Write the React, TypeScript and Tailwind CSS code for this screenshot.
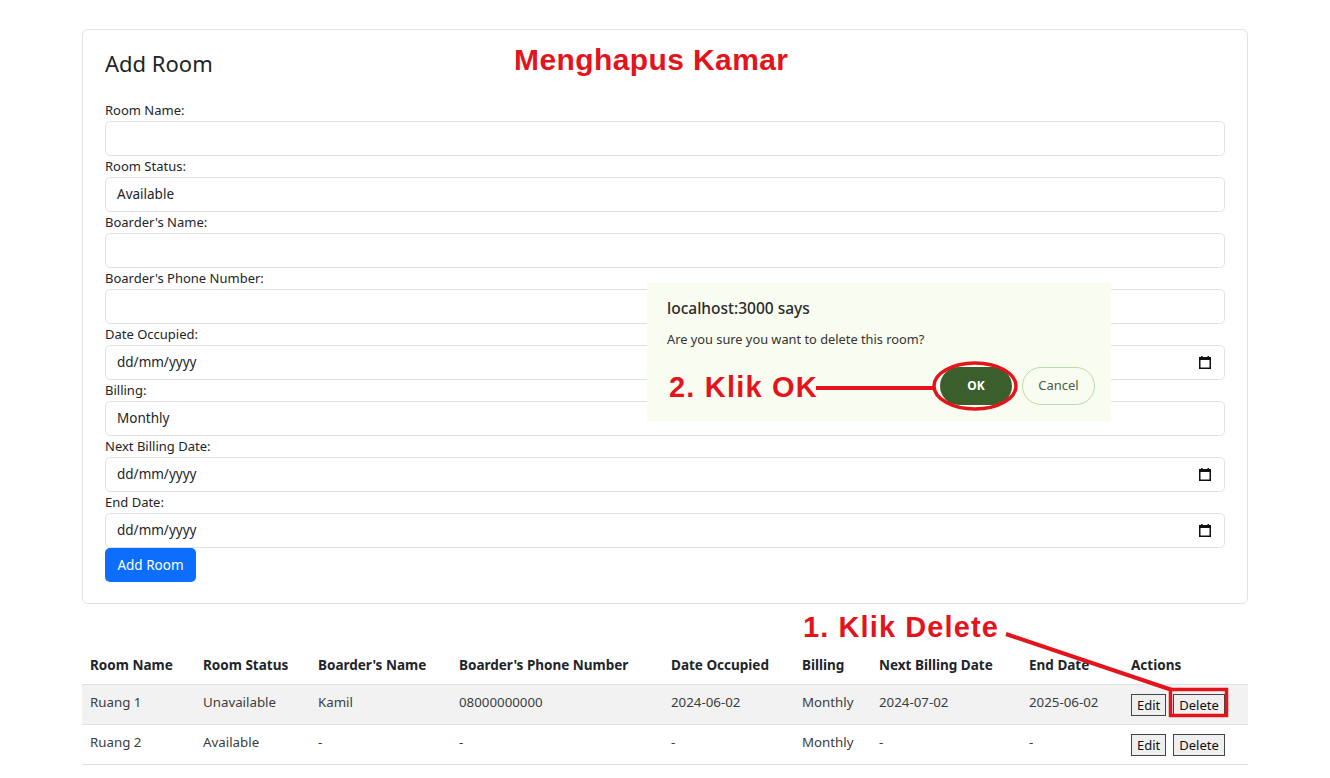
import React from "react";

const fields: { label: string; value?: string; date?: boolean }[] = [
  { label: "Room Name:" },
  { label: "Room Status:", value: "Available" },
  { label: "Boarder's Name:" },
  { label: "Boarder's Phone Number:" },
  { label: "Date Occupied:", value: "dd/mm/yyyy", date: true },
  { label: "Billing:", value: "Monthly" },
  { label: "Next Billing Date:", value: "dd/mm/yyyy", date: true },
  { label: "End Date:", value: "dd/mm/yyyy", date: true },
];

const cols = [
  { h: "Room Name", w: "w-[113px]" },
  { h: "Room Status", w: "w-[115px]" },
  { h: "Boarder's Name", w: "w-[141px]" },
  { h: "Boarder's Phone Number", w: "w-[212px]" },
  { h: "Date Occupied", w: "w-[131px]" },
  { h: "Billing", w: "w-[77px]" },
  { h: "Next Billing Date", w: "w-[150px]" },
  { h: "End Date", w: "w-[102px]" },
  { h: "Actions", w: "w-[125px]" },
];

const rows = [
  ["Ruang 1", "Unavailable", "Kamil", "08000000000", "2024-06-02", "Monthly", "2024-07-02", "2025-06-02"],
  ["Ruang 2", "Available", "-", "-", "-", "Monthly", "-", "-"],
];

function CalendarIcon() {
  return (
    <svg width="12" height="13" viewBox="0 0 12 13" className="block">
      <rect x="0.75" y="1.75" width="10.5" height="10.5" fill="none" stroke="#111" strokeWidth="1.5" />
      <rect x="0" y="1" width="12" height="3" fill="#111" />
      <rect x="2" y="0" width="1.5" height="2" fill="#111" />
      <rect x="8.5" y="0" width="1.5" height="2" fill="#111" />
    </svg>
  );
}

export default function App() {
  return (
    <div className="relative w-[1330px] min-h-[778px] bg-white font-['Noto_Sans',sans-serif] text-[#212529]">
      <div className="mx-[82px] pt-[29px]">
        {/* Card */}
        <div className="border border-[#dfe2e5] rounded-[6px] px-[22px] pt-[19px] pb-[21px]">
          <h3 className="text-[22px] leading-[28px] mb-[23px] text-[#212529]">Add Room</h3>
          <div className="flex flex-col">
            {fields.map((f) => (
              <div key={f.label} className="flex flex-col">
                <label className="text-[13px] leading-[21px] text-[#212529]">{f.label}</label>
                <div className="h-[35px] border border-[#dee2e6] rounded-[5px] flex items-center justify-between pl-[11px] pr-[13px] text-[13.5px] text-[#212529]">
                  <span>{f.value ?? ""}</span>
                  {f.date && <CalendarIcon />}
                </div>
              </div>
            ))}
          </div>
          <button className="mt-0 h-[34px] w-[91px] bg-[#0d6efd] text-white text-[13.5px] rounded-[5px]">Add Room</button>
        </div>

        {/* Table */}
        <table className="mt-[42px] w-full border-collapse table-fixed">
          <thead>
            <tr className="h-[38px] border-b border-[#dee2e6]">
              {cols.map((c) => (
                <th key={c.h} className={`${c.w} text-left font-bold px-[8px] text-[13.5px] text-[#212529]`}>{c.h}</th>
              ))}
            </tr>
          </thead>
          <tbody>
            {rows.map((r, i) => (
              <tr key={i} className={`h-[40px] border-b border-[#dee2e6] ${i === 0 ? "bg-[#f2f2f2]" : "bg-white"}`}>
                {r.map((v, j) => (
                  <td key={j} className="px-[8px] pb-[3px] text-[13.3px] text-[#3a3d40]">{v}</td>
                ))}
                <td className="px-[8px]">
                  <div className="flex gap-[7px] pt-[2px]">
                    <button className="h-[22px] px-[5px] border border-[#444] bg-[#efefef] text-[13px] leading-none text-[#111]">Edit</button>
                    <button className="h-[22px] px-[5px] border border-[#444] bg-[#efefef] text-[13px] leading-none text-[#111]">Delete</button>
                  </div>
                </td>
              </tr>
            ))}
          </tbody>
        </table>
      </div>

      {/* Title annotation */}
      <div className="absolute left-[514px] top-[40px] text-[30px] leading-[40px] font-bold text-[#e3141b] font-['Liberation_Sans',Arial,sans-serif] tracking-[0.4px]">
        Menghapus Kamar
      </div>

      {/* Dialog */}
      <div className="absolute left-[647px] top-[283px] w-[464px] h-[138px] bg-[#f8fcf1]">
        <div className="absolute left-[20px] top-[14px] text-[15.5px] leading-[22px] font-medium text-[#2b2b2b]">localhost:3000 says</div>
        <div className="absolute left-[20px] top-[47px] text-[12.8px] leading-[18px] text-[#333]">Are you sure you want to delete this room?</div>
        <div className="absolute left-[293px] top-[84px] flex gap-[10px]">
          <button className="h-[38px] w-[72px] rounded-full bg-[#3a5e2c] text-white text-[12px] font-bold">OK</button>
          <button className="h-[38px] w-[73px] rounded-full border border-[#bcdcae] text-[#4d5c48] text-[13px]">Cancel</button>
        </div>
      </div>

      <div className="absolute left-[669px] top-[369px] text-[29px] leading-[36px] font-bold text-[#e3141b] font-['Liberation_Sans',Arial,sans-serif] tracking-[1.2px]">
        2. Klik OK
      </div>
      <div className="absolute left-[803px] top-[608px] text-[29px] leading-[38px] font-bold text-[#e3141b] font-['Liberation_Sans',Arial,sans-serif] tracking-[1.1px]">
        1. Klik Delete
      </div>

      {/* Annotation drawings */}
      <svg className="absolute inset-0 pointer-events-none" width="1330" height="778">
        <line x1="816" y1="388" x2="935" y2="388" stroke="#e3141b" strokeWidth="4" />
        <ellipse cx="975" cy="386" rx="41" ry="23" fill="none" stroke="#e3141b" strokeWidth="3.5" />
        <line x1="1006" y1="634" x2="1172" y2="690" stroke="#e3141b" strokeWidth="4" />
        <rect x="1170.5" y="689.5" width="56" height="26" fill="none" stroke="#e3141b" strokeWidth="3.5" />
      </svg>
    </div>
  );
}
